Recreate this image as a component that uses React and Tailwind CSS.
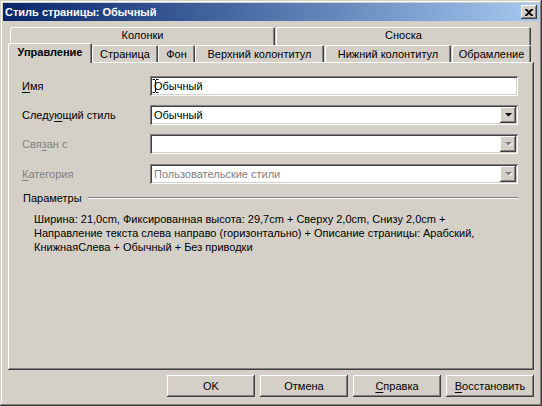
const raised =
  "shadow-[inset_-1px_-1px_0_#404040,inset_1px_1px_0_#ffffff,inset_-2px_-2px_0_#808080,inset_2px_2px_0_#d4d0c8]";
const sunken =
  "shadow-[inset_1px_1px_0_#808080,inset_-1px_-1px_0_#ffffff,inset_2px_2px_0_#404040,inset_-2px_-2px_0_#d4d0c8]";
const tabEdge =
  "shadow-[inset_1px_1px_0_#ffffff,inset_-1px_0_0_#404040,inset_-2px_0_0_#808080]";

function Mn({ children }) {
  return <span className="underline underline-offset-[2px] decoration-1">{children}</span>;
}

function Arrow({ disabled }) {
  return (
    <div className={`w-[16px] h-[16px] bg-[#d4d0c8] flex items-center justify-center ${raised}`}>
      <svg width="9" height="6" viewBox="0 0 9 6">
        {disabled && <path d="M2 2h7L5.5 5.5z" fill="#ffffff" />}
        <path d="M1 1h7L4.5 4.5z" fill={disabled ? "#808080" : "#000000"} />
      </svg>
    </div>
  );
}

function Field({ label, value, disabled, select, caret }) {
  return (
    <div className="flex items-center h-[20px]">
      <div className={`w-[128px] ml-[14px] ${disabled ? "text-[#808080]" : "text-black"}`}>{label}</div>
      <div className={`relative w-[368px] h-[20px] bg-white flex items-center pl-[4px] pr-[2px] ${sunken}`}>
        <span className={`flex-1 ${disabled ? "text-[#808080]" : "text-black"}`}>{value}</span>
        {select && <Arrow disabled={disabled} />}
        {caret && (
          <svg className="absolute left-[2px] top-[3px]" width="7" height="14" viewBox="0 0 7 14">
            <path d="M0.5 0.5h2.5M4 0.5h2.5M3.5 1v12M0.5 13.5h2.5M4 13.5h2.5" stroke="#000" strokeWidth="1" fill="none" />
          </svg>
        )}
      </div>
    </div>
  );
}

function Tab({ label, w, ml = "ml-0" }) {
  return (
    <div className={`${w} ${ml} h-[17px] bg-[#d4d0c8] rounded-t-[2px] flex items-center justify-center pt-[1px] ${tabEdge}`}>
      {label}
    </div>
  );
}

function Button({ children }) {
  return (
    <div className={`w-[88px] h-[22px] bg-[#d4d0c8] flex items-center justify-center ${raised}`}>{children}</div>
  );
}

export default function App() {
  return (
    <div className="w-[542px] h-[406px] bg-[#d4d0c8] p-[3px] flex flex-col text-[11px] leading-none text-black font-['Liberation_Sans',Arial,sans-serif] shadow-[inset_-1px_-1px_0_#404040,inset_1px_1px_0_#d4d0c8,inset_-2px_-2px_0_#808080,inset_2px_2px_0_#ffffff]">
      <div className="h-[18px] flex items-center justify-between pl-[2px] pr-[2px] bg-gradient-to-r from-[#0a246a] to-[#a6caf0]">
        <span className="text-white font-bold text-[11px]">Стиль страницы: Обычный</span>
        <div className={`w-[16px] h-[14px] bg-[#d4d0c8] flex items-center justify-center ${raised}`}>
          <svg width="8" height="7" viewBox="0 0 8 7">
            <path d="M0 0h2l2 2 2-2h2v1L5 3.5 8 6v1H6L4 5 2 7H0V6l3-2.5L0 1z" fill="#000" />
          </svg>
        </div>
      </div>

      <div className="flex flex-col mx-[5px] mt-[6px]">
        <div className="flex h-[18px] pl-[2px]">
          <div className={`w-[265px] h-[18px] bg-[#d4d0c8] rounded-t-[2px] flex items-center justify-center pb-[1px] ${tabEdge}`}>Колонки</div>
          <div className={`w-[255px] ml-[1px] h-[18px] bg-[#d4d0c8] rounded-t-[2px] flex items-center justify-center pb-[1px] ${tabEdge}`}>Сноска</div>
        </div>
        <div className="flex h-[17px] items-start">
          <div className="relative z-10 -top-[2px] w-[84px] h-[20px] bg-[#d4d0c8] rounded-t-[2px] flex items-start justify-center pt-[4px] font-bold shadow-[inset_1px_1px_0_#ffffff,inset_-1px_0_0_#404040,inset_-2px_0_0_#808080]">
            Управление
          </div>
          <Tab label="Страница" w="w-[66px]" />
          <Tab label="Фон" w="w-[37px]" />
          <Tab label="Верхний колонтитул" w="w-[129px]" />
          <Tab label="Нижний колонтитул" w="w-[126px]" ml="ml-[1px]" />
          <Tab label="Обрамление" w="w-[79px]" ml="ml-[1px]" />
        </div>

        <div className={`h-[308px] flex flex-col pt-[14px] ${raised}`}>
          <div className="flex flex-col gap-[9px]">
            <Field label={<><Mn>И</Mn>мя</>} value="Обычный" caret />
            <Field label={<>Следу<Mn>ю</Mn>щий стиль</>} value="Обычный" select />
            <Field label={<>Свя<Mn>з</Mn>ан с</>} value="" select disabled />
            <div className="mt-[1px]">
              <Field label={<><Mn>К</Mn>атегория</>} value="Пользовательские стили" select disabled />
            </div>
          </div>

          <div className="flex items-center mt-[8px] ml-[15px] mr-[16px] h-[12px]">
            <span>Параметры</span>
            <div className="flex-1 ml-[6px] h-[2px] border-t border-[#808080] border-b border-b-white" />
          </div>
          <div className="ml-[26px] mt-[8px] leading-[14px] whitespace-nowrap">
            <div>Ширина: 21,0cm, Фиксированная высота: 29,7cm + Сверху 2,0cm, Снизу 2,0cm +</div>
            <div>Направление текста слева направо (горизонтально) + Описание страницы: Арабский,</div>
            <div>КнижнаяСлева + Обычный + Без приводки</div>
          </div>
        </div>

        <div className="flex justify-end gap-[5px] mt-[5px] pr-0">
          <Button>OK</Button>
          <Button>Отмена</Button>
          <Button><Mn>С</Mn>правка</Button>
          <Button><Mn>В</Mn>осстановить</Button>
        </div>
      </div>
    </div>
  );
}
